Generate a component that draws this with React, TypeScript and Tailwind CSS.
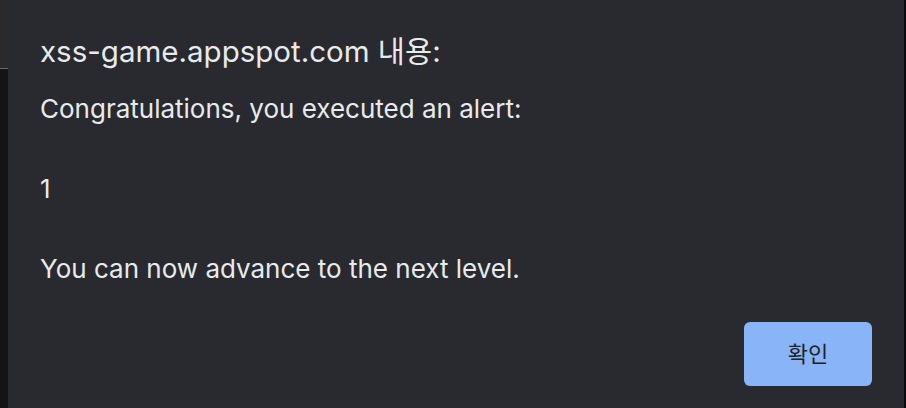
import React from 'react';

const message = 'Congratulations, you executed an alert:\n\n1\n\nYou can now advance to the next level.';

const App = () => {
  return (
    <div className="flex h-[408px] w-[906px] overflow-hidden bg-[#0f0f0f] font-['Inter','Noto_Sans_CJK_KR',sans-serif]">
      {/* page behind the dialog */}
      <div className="flex w-2 flex-col">
        <div className="h-[68px] bg-[#2a2a2a]" />
        <div className="h-px bg-[#6b6b6b]" />
        <div className="flex-1 bg-[#141414]" />
      </div>

      {/* alert dialog */}
      <div className="flex flex-1 flex-col bg-[#292a2f] pl-8 pr-8 text-[#e8eaed]">
        <h1 className="mt-[33px] text-[29.5px] leading-[36px]">xss-game.appspot.com 내용:</h1>
        <p className="mt-[20px] whitespace-pre-line text-[26px] leading-[40px]">{message}</p>
        <div className="mt-auto mb-[22px] flex justify-end">
          <button className="h-[64px] w-[128px] rounded-md bg-[#8ab4f8] text-[22px] text-[#202124]">확인</button>
        </div>
      </div>

      <div className="w-[2px] bg-[#0a0a0a]" />
    </div>
  );
};

export default App;
